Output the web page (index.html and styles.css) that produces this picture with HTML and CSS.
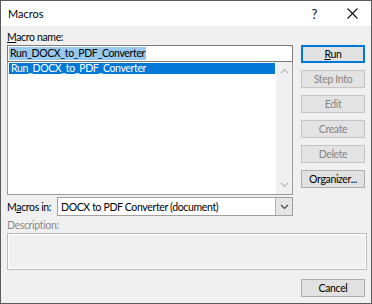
FILE: index.html
```html
<!DOCTYPE html>
<html>
<head>
<meta charset="utf-8">
<link rel="stylesheet" href="styles.css">
</head>
<body>
<div class="window">
  <div class="titlebar">
    <span class="title">Macros</span>
    <span class="help">?</span>
    <span class="close"><svg width="11" height="11" viewBox="0 0 11 11"><path d="M0.5 0.5 L10.5 10.5 M10.5 0.5 L0.5 10.5" stroke="#111" stroke-width="1.1" fill="none"/></svg></span>
  </div>
  <div class="content">
    <div class="top">
      <div class="left">
        <div class="label name-label"><u>M</u>acro name:</div>
        <div class="input"><span class="sel">Run_DOCX_to_PDF_Converter</span></div>
        <div class="listbox">
          <div class="items">
            <div class="item selected">Run_DOCX_to_PDF_Converter</div>
          </div>
          <div class="scrollbar">
            <svg class="arrow" width="9" height="6" viewBox="0 0 9 6"><path d="M1 5 L4.5 1.5 L8 5" stroke="#b8b8b8" stroke-width="1.2" fill="none"/></svg>
            <svg class="arrow" width="9" height="6" viewBox="0 0 9 6"><path d="M1 1 L4.5 4.5 L8 1" stroke="#b8b8b8" stroke-width="1.2" fill="none"/></svg>
          </div>
        </div>
        <div class="inrow">
          <span class="label in-label">M<u>a</u>cros in:</span>
          <div class="select">
            <span class="select-text">DOCX to PDF Converter (document)</span>
            <span class="drop"><svg width="9" height="6" viewBox="0 0 9 6"><path d="M1 1 L4.5 4.5 L8 1" stroke="#444" stroke-width="1.1" fill="none"/></svg></span>
          </div>
        </div>
      </div>
      <div class="buttons">
        <div class="btn default"><u>R</u>un</div>
        <div class="btn disabled">Step Into</div>
        <div class="btn disabled">Edit</div>
        <div class="btn disabled">Create</div>
        <div class="btn disabled">Delete</div>
        <div class="btn">Or<u>g</u>anizer...</div>
      </div>
    </div>
    <div class="label desc-label">Description:</div>
    <div class="desc"></div>
    <div class="footer">
      <div class="btn">Cancel</div>
    </div>
  </div>
</div>
</body>
</html>
```
FILE: styles.css
```css
html, body {
  margin: 0;
  padding: 0;
}
body {
  font-family: Lato, "Noto Sans", sans-serif;
  font-size: 10.5px;
  letter-spacing: -0.35px;
  color: #000;
  background: #f0f0f0;
}
.window {
  width: 372px;
  height: 304px;
  box-sizing: border-box;
  border: 1px solid #5b5b5b;
  background: #f0f0f0;
  display: flex;
  flex-direction: column;
}
.titlebar {
  height: 25px;
  background: #fff;
  display: flex;
  align-items: center;
  padding-left: 7px;
}
.title {
  flex: 1;
  font-size: 11px;
  letter-spacing: 0;
}
.help {
  font-size: 13px;
  margin-right: 30px;
  color: #111;
}
.close {
  display: flex;
  margin-right: 13px;
}
.content {
  padding: 4px 6px 0 6px;
  display: flex;
  flex-direction: column;
}
.top {
  display: flex;
  gap: 8px;
}
.left {
  width: 286px;
  display: flex;
  flex-direction: column;
}
.label {
  line-height: 14px;
}
.name-label {
  margin-bottom: 1px;
}
.input {
  height: 17px;
  box-sizing: border-box;
  border: 1px solid #7a7a7a;
  background: #fff;
  display: flex;
  align-items: center;
  padding-left: 1px;
}
.sel {
  background: #99c9ef;
  line-height: 13px;
  padding: 0 1px;
}
.listbox {
  height: 133px;
  box-sizing: border-box;
  border: 1px solid #9a9a9a;
  border-top: none;
  background: #fff;
  display: flex;
}
.items {
  flex: 1;
  padding: 1px 1px 0 1px;
}
.item {
  line-height: 11px;
  height: 11px;
  padding-left: 2px;
}
.item.selected {
  background: #0078d7;
  color: #fff;
}
.scrollbar {
  width: 16px;
  background: #f0f0f0;
  display: flex;
  flex-direction: column;
  justify-content: space-between;
  align-items: center;
  padding: 6px 0 6px;
}
.arrow {
  display: block;
}
.inrow {
  display: flex;
  align-items: center;
  margin-top: 2px;
}
.in-label {
  width: 50px;
  flex: none;
}
.select {
  flex: 1;
  height: 19px;
  box-sizing: border-box;
  border: 1px solid #a0a0a0;
  background: #fff;
  display: flex;
  align-items: center;
}
.select-text {
  flex: 1;
  padding-left: 3px;
}
.drop {
  width: 16px;
  height: 17px;
  background: #e5e5e5;
  border-left: 1px solid #b5b5b5;
  display: flex;
  align-items: center;
  justify-content: center;
}
.buttons {
  display: flex;
  flex-direction: column;
  gap: 7px;
  padding-top: 15px;
}
.btn {
  width: 64px;
  height: 18px;
  box-sizing: border-box;
  border: 1px solid #adadad;
  background: #e1e1e1;
  display: flex;
  align-items: center;
  justify-content: center;
  line-height: 14px;
}
.btn.default {
  border: 2px solid #0078d7;
}
.btn.disabled {
  background: #e3e3e3;
  border-color: #c4c4c4;
  color: #838383;
}
.desc-label {
  color: #8a8a8a;
  margin-top: 2px;
}
.desc {
  height: 37px;
  box-sizing: border-box;
  border: 1px solid #bcbcbc;
  box-shadow: inset 0 0 0 1px #fff;
  background: #f0f0f0;
  margin-top: 1px;
  width: 360px;
}
.footer {
  display: flex;
  justify-content: flex-end;
  margin-top: 9px;
}
u {
  text-decoration: underline;
  text-underline-offset: 1px;
}
```
